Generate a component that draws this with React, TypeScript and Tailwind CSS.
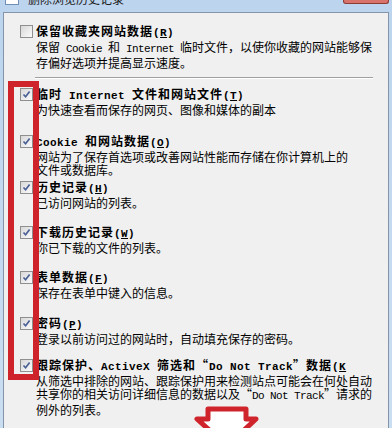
import type { ReactNode } from "react"

type Item = {
  title: string
  key: string
  open?: boolean
  desc: string[]
  h: string
  checked: boolean
}

const items: Item[] = [
  {
    title: "临时 Internet 文件和网站文件",
    key: "T",
    desc: ["为快速查看而保存的网页、图像和媒体的副本"],
    h: "h-[47px]",
    checked: true,
  },
  {
    title: "Cookie 和网站数据",
    key: "O",
    desc: ["网站为了保存首选项或改善网站性能而存储在你计算机上的", "文件或数据库。"],
    h: "h-[46px]",
    checked: true,
  },
  { title: "历史记录", key: "H", desc: ["已访问网站的列表。"], h: "h-[45px]", checked: true },
  { title: "下载历史记录", key: "W", desc: ["你已下载的文件的列表。"], h: "h-[45px]", checked: true },
  { title: "表单数据", key: "F", desc: ["保存在表单中键入的信息。"], h: "h-[46px]", checked: true },
  { title: "密码", key: "P", desc: ["登录以前访问过的网站时，自动填充保存的密码。"], h: "h-[42px]", checked: true },
  {
    title: "跟踪保护、ActiveX 筛选和“Do Not Track”数据",
    key: "K",
    open: true,
    desc: [
      "从筛选中排除的网站、跟踪保护用来检测站点可能会在何处自动",
      "共享你的相关访问详细信息的数据以及“Do Not Track”请求的",
      "例外的列表。",
    ],
    h: "h-[70px]",
    checked: true,
  },
]

// split text into ascii / non-ascii runs so latin gets the half-width mono face
const splitRuns = (text: string) => {
  const out: { ascii: boolean; s: string }[] = []
  for (const c of text) {
    const ascii = c.charCodeAt(0) < 128
    const last = out[out.length - 1]
    if (last && last.ascii === ascii) last.s += c
    else out.push({ ascii, s: c })
  }
  return out
}

const Mixed = ({ text, bold }: { text: string; bold?: boolean }) => (
  <>
    {splitRuns(text).map((r, i) =>
      r.ascii ? (
        <span
          key={i}
          className={
            bold
              ? "whitespace-pre font-['Liberation_Mono',monospace] text-[11px] font-bold tracking-[0.4px]"
              : "whitespace-pre font-['Liberation_Mono',monospace] text-[11px] tracking-[-0.6px]"
          }
        >
          {r.s}
        </span>
      ) : (
        <span key={i} className={bold ? "font-bold tracking-[1px]" : ""}>
          {r.s}
        </span>
      )
    )}
  </>
)

const Title = ({ text, k, open }: { text: string; k: string; open?: boolean }) => (
  <div className="whitespace-nowrap leading-[14px]">
    <Mixed text={text} bold />
    <span className="font-['Liberation_Mono',monospace] text-[11px] font-bold tracking-[0.4px]">
      (<span className="underline">{k}</span>
      {open ? "" : ")"}
    </span>
  </div>
)

const Checkbox = ({ checked }: { checked: boolean }) => (
  <div className="mt-[1px] flex h-[13px] w-[13px] shrink-0 items-center justify-center border border-[#8e8f8f] bg-gradient-to-br from-[#d8d8d8] to-[#fbfbfb]">
    {checked && (
      <svg width="9" height="9" viewBox="0 0 9 9">
        <path d="M1.5 4.5 L3.6 6.8 L7.6 1.6" fill="none" stroke="#4a5f96" strokeWidth="1.7" />
      </svg>
    )}
  </div>
)

const Row = ({ children, checked, h }: { children: ReactNode; checked: boolean; h?: string }) => (
  <div className={`flex gap-[3px] ${h ?? ""}`}>
    <Checkbox checked={checked} />
    <div className="flex flex-col">{children}</div>
  </div>
)

export default function App() {
  return (
    <div className="relative h-[428px] w-[392px] overflow-hidden bg-gradient-to-b from-[#bcd4ee] to-[#cadef2] font-['Noto_Sans_CJK_SC',sans-serif] text-[12px] text-black">
      {/* title bar, mostly scrolled off the top */}
      <div className="flex h-[12px] items-start">
        <div className="ml-[5px] h-[5px] w-[14px] border border-t-0 border-[#6f8fb8] bg-white" />
        <div className="ml-[9px] mt-[-8px] leading-[14px] text-[#1c1c1c]">删除浏览历史记录</div>
        <div className="ml-auto mr-[3px] h-[4px] w-[46px] rounded-b-[3px] border border-t-0 border-[#8e3b36] bg-[#d8736c]" />
      </div>

      {/* dialog body */}
      <div className="mx-[3px] h-[500px] border border-[#8495aa] bg-[#f0f0f0] pl-[16px] pt-[11px]">
        <Row checked={false}>
          <Title text="保留收藏夹网站数据" k="R" />
          <div className="whitespace-nowrap leading-[13px]">
            <Mixed text="保留 Cookie 和 Internet 临时文件，以使你收藏的网站能够保" />
          </div>
          <div className="whitespace-nowrap leading-[13px]">存偏好选项并提高显示速度。</div>
        </Row>

        <div className="ml-[15px] mr-[15px] mt-[8px] mb-[8px] h-[2px] border-t border-b border-t-[#a0a0a0] border-b-white" />

        {items.map((it) => (
          <Row key={it.key} checked={it.checked} h={it.h}>
            <Title text={it.title} k={it.key} open={it.open} />
            {it.desc.map((d, i) => (
              <div key={i} className="whitespace-nowrap leading-[13px]">
                <Mixed text={d} />
              </div>
            ))}
          </Row>
        ))}
      </div>

      {/* red annotation box around the checkboxes */}
      <div className="absolute left-[8px] top-[81px] h-[299px] w-[31px] border-[6px] border-[#cf232c]" />

      {/* red hollow arrow */}
      <svg className="absolute left-[190px] top-[400px]" width="72" height="28" viewBox="0 0 72 28">
        <path d="M18 9 H56 V19 H66 L37 46 L7 19 H18 Z" fill="#ffffff" stroke="#d0242c" strokeWidth="5" strokeLinejoin="round" />
      </svg>
    </div>
  )
}
